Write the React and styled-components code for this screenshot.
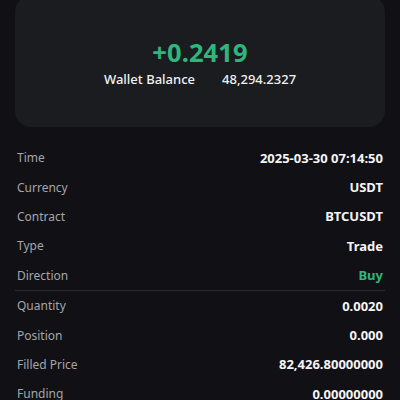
import React from "react";
import styled, { createGlobalStyle } from "styled-components";

const GlobalStyle = createGlobalStyle`
  html, body {
    margin: 0;
    padding: 0;
    background: #111115;
    font-family: "Noto Sans", Inter, sans-serif;
  }
`;

const Page = styled.div`
  width: 400px;
  height: 400px;
  overflow: hidden;
  background: #111115;
`;

const Card = styled.div`
  margin: -4px 15px 0;
  height: 131px;
  box-sizing: border-box;
  background: #1b1c1f;
  border-radius: 16px;
  display: flex;
  flex-direction: column;
  align-items: center;
  padding-top: 42px;
`;

const Pnl = styled.div`
  color: #2eb77d;
  font-size: 25.5px;
  font-weight: 700;
  line-height: 28px;
  letter-spacing: 0.1px;
`;

const BalanceLine = styled.div`
  display: flex;
  gap: 27px;
  margin-top: 4px;
  color: #f0f0f2;
  font-size: 13px;
  font-weight: 500;
  line-height: 18px;
`;

const List = styled.div`
  margin: 16px 17px 0;
  display: flex;
  flex-direction: column;
`;

const Row = styled.div`
  display: flex;
  justify-content: space-between;
  align-items: center;
  height: 29.4px;
  border-bottom: ${(p) => (p.$divider ? "1px solid #2a2b30" : "none")};
  margin: ${(p) => (p.$divider ? "0 -2px" : "0")};
  padding: ${(p) => (p.$divider ? "0 2px" : "0")};
`;

const Label = styled.span`
  color: #a3a5ab;
  font-size: 12px;
`;

const Value = styled.span`
  color: ${(p) => (p.$green ? "#2eb77d" : "#f4f4f6")};
  font-size: 13px;
  font-weight: 700;
`;

const rows = [
  ["Time", "2025-03-30 07:14:50"],
  ["Currency", "USDT"],
  ["Contract", "BTCUSDT"],
  ["Type", "Trade"],
  ["Direction", "Buy", true, true],
  ["Quantity", "0.0020"],
  ["Position", "0.000"],
  ["Filled Price", "82,426.80000000"],
  ["Funding", "0.00000000"],
];

export default function App() {
  return (
    <Page>
      <GlobalStyle />
      <Card>
        <Pnl>+0.2419</Pnl>
        <BalanceLine>
          <span>Wallet Balance</span>
          <span>48,294.2327</span>
        </BalanceLine>
      </Card>
      <List>
        {rows.map(([label, value, green, divider]) => (
          <Row key={label} $divider={divider}>
            <Label>{label}</Label>
            <Value $green={green}>{value}</Value>
          </Row>
        ))}
      </List>
    </Page>
  );
}
